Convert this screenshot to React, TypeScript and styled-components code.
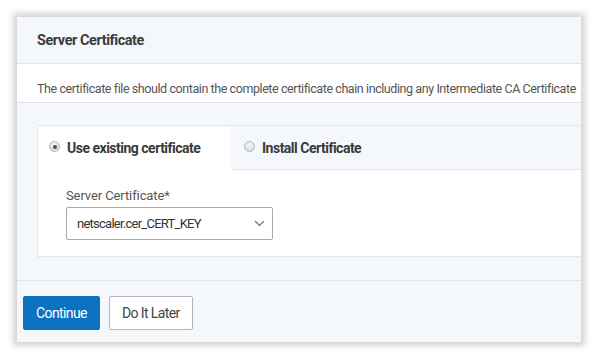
import * as React from "react"
import styled, { createGlobalStyle } from "styled-components"

const GlobalStyle = createGlobalStyle`
  html, body {
    margin: 0;
    padding: 0;
    background: #ffffff;
  }
  body {
    font-family: Roboto, "Liberation Sans", sans-serif;
  }
`

const Page = styled.div`
  width: 598px;
  height: 359px;
  padding: 17px 0 0 17px;
  box-sizing: border-box;
`

const Panel = styled.div`
  width: 564px;
  height: 325px;
  display: flex;
  flex-direction: column;
  background: #f4f7fb;
  overflow: hidden;
  box-shadow: 0 0 6px 4px #dad2d3;
`

const Header = styled.div`
  height: 46px;
  flex: none;
  display: flex;
  align-items: center;
  padding-left: 20px;
  border-bottom: 1px solid #e1e5ea;
  font-size: 14.5px;
  font-weight: bold;
  letter-spacing: -0.45px;
  color: #3b3b3b;
`

const Note = styled.div`
  height: 39px;
  flex: none;
  box-sizing: border-box;
  padding: 17px 0 0 20px;
  background: #ffffff;
  border-bottom: 1px solid #e1e5ea;
  font-size: 12.5px;
  letter-spacing: -0.42px;
  color: #555555;
  white-space: nowrap;
`

const Body = styled.div`
  flex: none;
  padding: 22px 0 23px 20px;
  border-bottom: 1px solid #e1e5ea;
`

const TabBox = styled.div`
  width: 600px;
  border: 1px solid #e3e7ec;
  border-right: none;
  background: #ffffff;
`

const TabStrip = styled.div`
  display: flex;
  height: 44px;
  background: #f4f7fb;
`

const Tab = styled.div<{ $active?: boolean }>`
  display: flex;
  align-items: center;
  gap: 7px;
  box-sizing: border-box;
  padding-left: ${(p) => (p.$active ? "11px" : "13px")};
  width: ${(p) => (p.$active ? "193px" : "auto")};
  flex: ${(p) => (p.$active ? "none" : "1")};
  background: ${(p) => (p.$active ? "#ffffff" : "#f4f7fb")};
  border-bottom: ${(p) => (p.$active ? "1px solid #ffffff" : "1px solid #e3e7ec")};
  font-size: 14px;
  font-weight: bold;
  letter-spacing: -0.5px;
  color: #3a3a3a;
`

const Radio = styled.span<{ $checked?: boolean }>`
  flex: none;
  width: 11px;
  height: 11px;
  border-radius: 50%;
  box-sizing: border-box;
  border: 1px solid #b5b5b5;
  background: radial-gradient(circle at 50% 35%, #f8f8f8 0%, #d0d0d0 100%);
  position: relative;
  margin-top: -2px;
  &::after {
    content: "";
    display: ${(p) => (p.$checked ? "block" : "none")};
    position: absolute;
    left: 2.5px;
    top: 2.5px;
    width: 4px;
    height: 4px;
    border-radius: 50%;
    background: #4a4a4a;
  }
`

const TabContent = styled.div`
  padding: 18px 0 16px 28px;
  display: flex;
  flex-direction: column;
  gap: 4px;
`

const Label = styled.label`
  font-size: 13px;
  letter-spacing: -0.1px;
  color: #555555;
`

const Select = styled.div`
  width: 207px;
  height: 33px;
  box-sizing: border-box;
  display: flex;
  align-items: center;
  justify-content: space-between;
  padding: 0 7px 0 10px;
  border: 1px solid #a9a9a9;
  border-radius: 2px;
  background: #ffffff;
  font-size: 13px;
  letter-spacing: -0.75px;
  color: #333333;
`

const Footer = styled.div`
  flex: 1;
  display: flex;
  align-items: flex-start;
  gap: 9px;
  padding: 15px 0 0 6px;
`

const Button = styled.button<{ $primary?: boolean }>`
  height: 34px;
  padding: 0 12px;
  border-radius: 2px;
  font-family: inherit;
  font-size: 14px;
  letter-spacing: -0.6px;
  cursor: pointer;
  border: 1px solid ${(p) => (p.$primary ? "#0b72c2" : "#b5b5b5")};
  background: ${(p) => (p.$primary ? "#0b72c2" : "#ffffff")};
  color: ${(p) => (p.$primary ? "#ffffff" : "#444444")};
`

const Chevron = () => (
  <svg width="11" height="7" viewBox="0 0 11 7">
    <path d="M1 1 L5.5 5.5 L10 1" fill="none" stroke="#707070" strokeWidth="1.1" />
  </svg>
)

const App = (): React.ReactElement => {
  return (
    <Page>
      <GlobalStyle />
      <Panel>
        <Header>Server Certificate</Header>
        <Note>The certificate file should contain the complete certificate chain including any Intermediate CA Certificate</Note>
        <Body>
          <TabBox>
            <TabStrip>
              <Tab $active>
                <Radio $checked />
                <span>Use existing certificate</span>
              </Tab>
              <Tab>
                <Radio />
                <span>Install Certificate</span>
              </Tab>
            </TabStrip>
            <TabContent>
              <Label>Server Certificate*</Label>
              <Select>
                <span>netscaler.cer_CERT_KEY</span>
                <Chevron />
              </Select>
            </TabContent>
          </TabBox>
        </Body>
        <Footer>
          <Button $primary>Continue</Button>
          <Button>Do It Later</Button>
        </Footer>
      </Panel>
    </Page>
  )
}

export default App
